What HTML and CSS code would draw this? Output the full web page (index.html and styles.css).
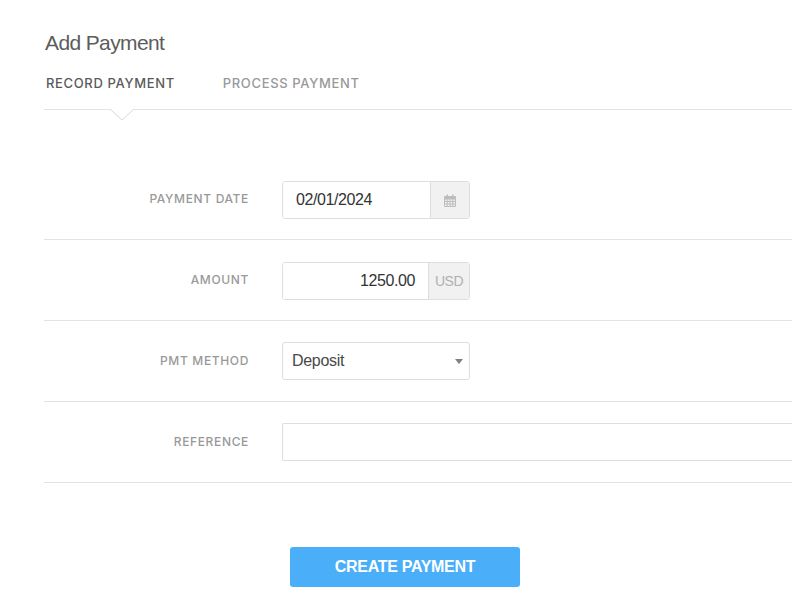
FILE: index.html
```html
<!DOCTYPE html>
<html lang="en">
<head>
<meta charset="utf-8">
<title>Add Payment</title>
<link rel="stylesheet" href="styles.css">
</head>
<body>
<main class="page">
  <h1 class="title">Add Payment</h1>
  <nav class="tabs">
    <a class="tab tab-active">RECORD PAYMENT</a>
    <a class="tab">PROCESS PAYMENT</a>
    <svg class="caret" width="24" height="12" viewBox="0 0 24 12"><path d="M0 0 L12 11 L24 0" fill="#fff" stroke="#d8d8d8" stroke-width="1"/></svg>
  </nav>
  <form class="form">
    <div class="row">
      <label class="label">PAYMENT DATE</label>
      <div class="group group-date">
        <div class="field field-date">02/01/2024</div>
        <div class="addon addon-date">
          <svg width="12" height="13" viewBox="0 0 12 13"><path d="M0.5 2.5h11v10h-11z M0.5 5h11 M0.5 7.5h11 M0.5 10h11 M3.2 5v7.5 M6 5v7.5 M8.8 5v7.5" fill="none" stroke="#bdbdbd" stroke-width="1"/><path d="M2.5 0.5h1.5v3h-1.5z M8 0.5h1.5v3h-1.5z" fill="#bdbdbd"/><path d="M0.5 2.5h11v2.5h-11z" fill="#bdbdbd"/></svg>
        </div>
      </div>
    </div>
    <div class="row">
      <label class="label">AMOUNT</label>
      <div class="group group-amount">
        <div class="field field-amount">1250.00</div>
        <div class="addon addon-usd">USD</div>
      </div>
    </div>
    <div class="row">
      <label class="label">PMT METHOD</label>
      <div class="select">
        <span>Deposit</span>
        <span class="arrow"></span>
      </div>
    </div>
    <div class="row">
      <label class="label">REFERENCE</label>
      <div class="field-wide"></div>
    </div>
  </form>
  <div class="actions">
    <button type="button" class="submit">CREATE PAYMENT</button>
  </div>
</main>
</body>
</html>
```

FILE: styles.css
```css
* { box-sizing: border-box; }
html, body { margin: 0; padding: 0; background: #fff; }
body { width: 792px; height: 614px; overflow: hidden; font-family: "Liberation Sans", Arial, sans-serif; }
.page { padding: 31px 0 0 44px; }
.title { margin: 0; padding-left: 1px; font-size: 21px; line-height: 24px; font-weight: 400; letter-spacing: -0.62px; color: #5c5c5c; }
.tabs { position: relative; display: flex; gap: 48px; height: 43px; margin-top: 12px; padding: 7px 0 0 2px; border-bottom: 1px solid #e3e3e3; }
.tab { font-family: Inter, "Open Sans", sans-serif; font-size: 13px; line-height: 18px; font-weight: 500; letter-spacing: 0.65px; color: #999; }
.tab-active { color: #5a5a5a; }
.caret { position: absolute; left: 66px; top: 42px; }
.form { margin-top: 49px; }
.row { display: flex; align-items: center; height: 81px; border-bottom: 1px solid #e3e3e3; }
.label { width: 205px; padding-bottom: 2px; text-align: right; font-family: Inter, "Open Sans", sans-serif; font-size: 12px; font-weight: 500; letter-spacing: 0.65px; color: #999; }
.group { display: flex; height: 38px; margin: 2px 0 0 33px; width: 188px; border: 1px solid #dedede; border-radius: 3px; overflow: hidden; }
.field { flex: 1; font-size: 16px; line-height: 36px; letter-spacing: -0.4px; color: #333; background: #fff; }
.field-date { padding-left: 13px; }
.field-amount { padding-right: 13px; text-align: right; }
.addon { display: flex; align-items: center; justify-content: center; background: #f1f1f1; border-left: 1px solid #dedede; }
.addon-date { width: 39px; }
.addon-usd { width: 41px; font-size: 14px; letter-spacing: -0.5px; color: #b0b0b0; }
.select { display: flex; align-items: center; justify-content: space-between; width: 188px; height: 38px; margin-left: 33px; padding: 0 6px 0 9px; border: 1px solid #dedede; border-radius: 3px; font-size: 16px; letter-spacing: -0.3px; color: #484848; }
.arrow { width: 0; height: 0; border-left: 4.5px solid transparent; border-right: 4.5px solid transparent; border-top: 5px solid #808080; }
.field-wide { flex: 1; height: 38px; margin-left: 33px; border: 1px solid #dedede; border-right: 0; border-radius: 2px 0 0 2px; }
.actions { display: flex; margin-top: 64px; padding-left: 246px; }
.submit { width: 230px; height: 40px; padding: 0 0 1px; border: 0; border-radius: 3px; background: #4aaef9; color: #fff; font-family: "Liberation Sans", Arial, sans-serif; font-size: 16px; font-weight: 700; letter-spacing: -0.3px; }
```
